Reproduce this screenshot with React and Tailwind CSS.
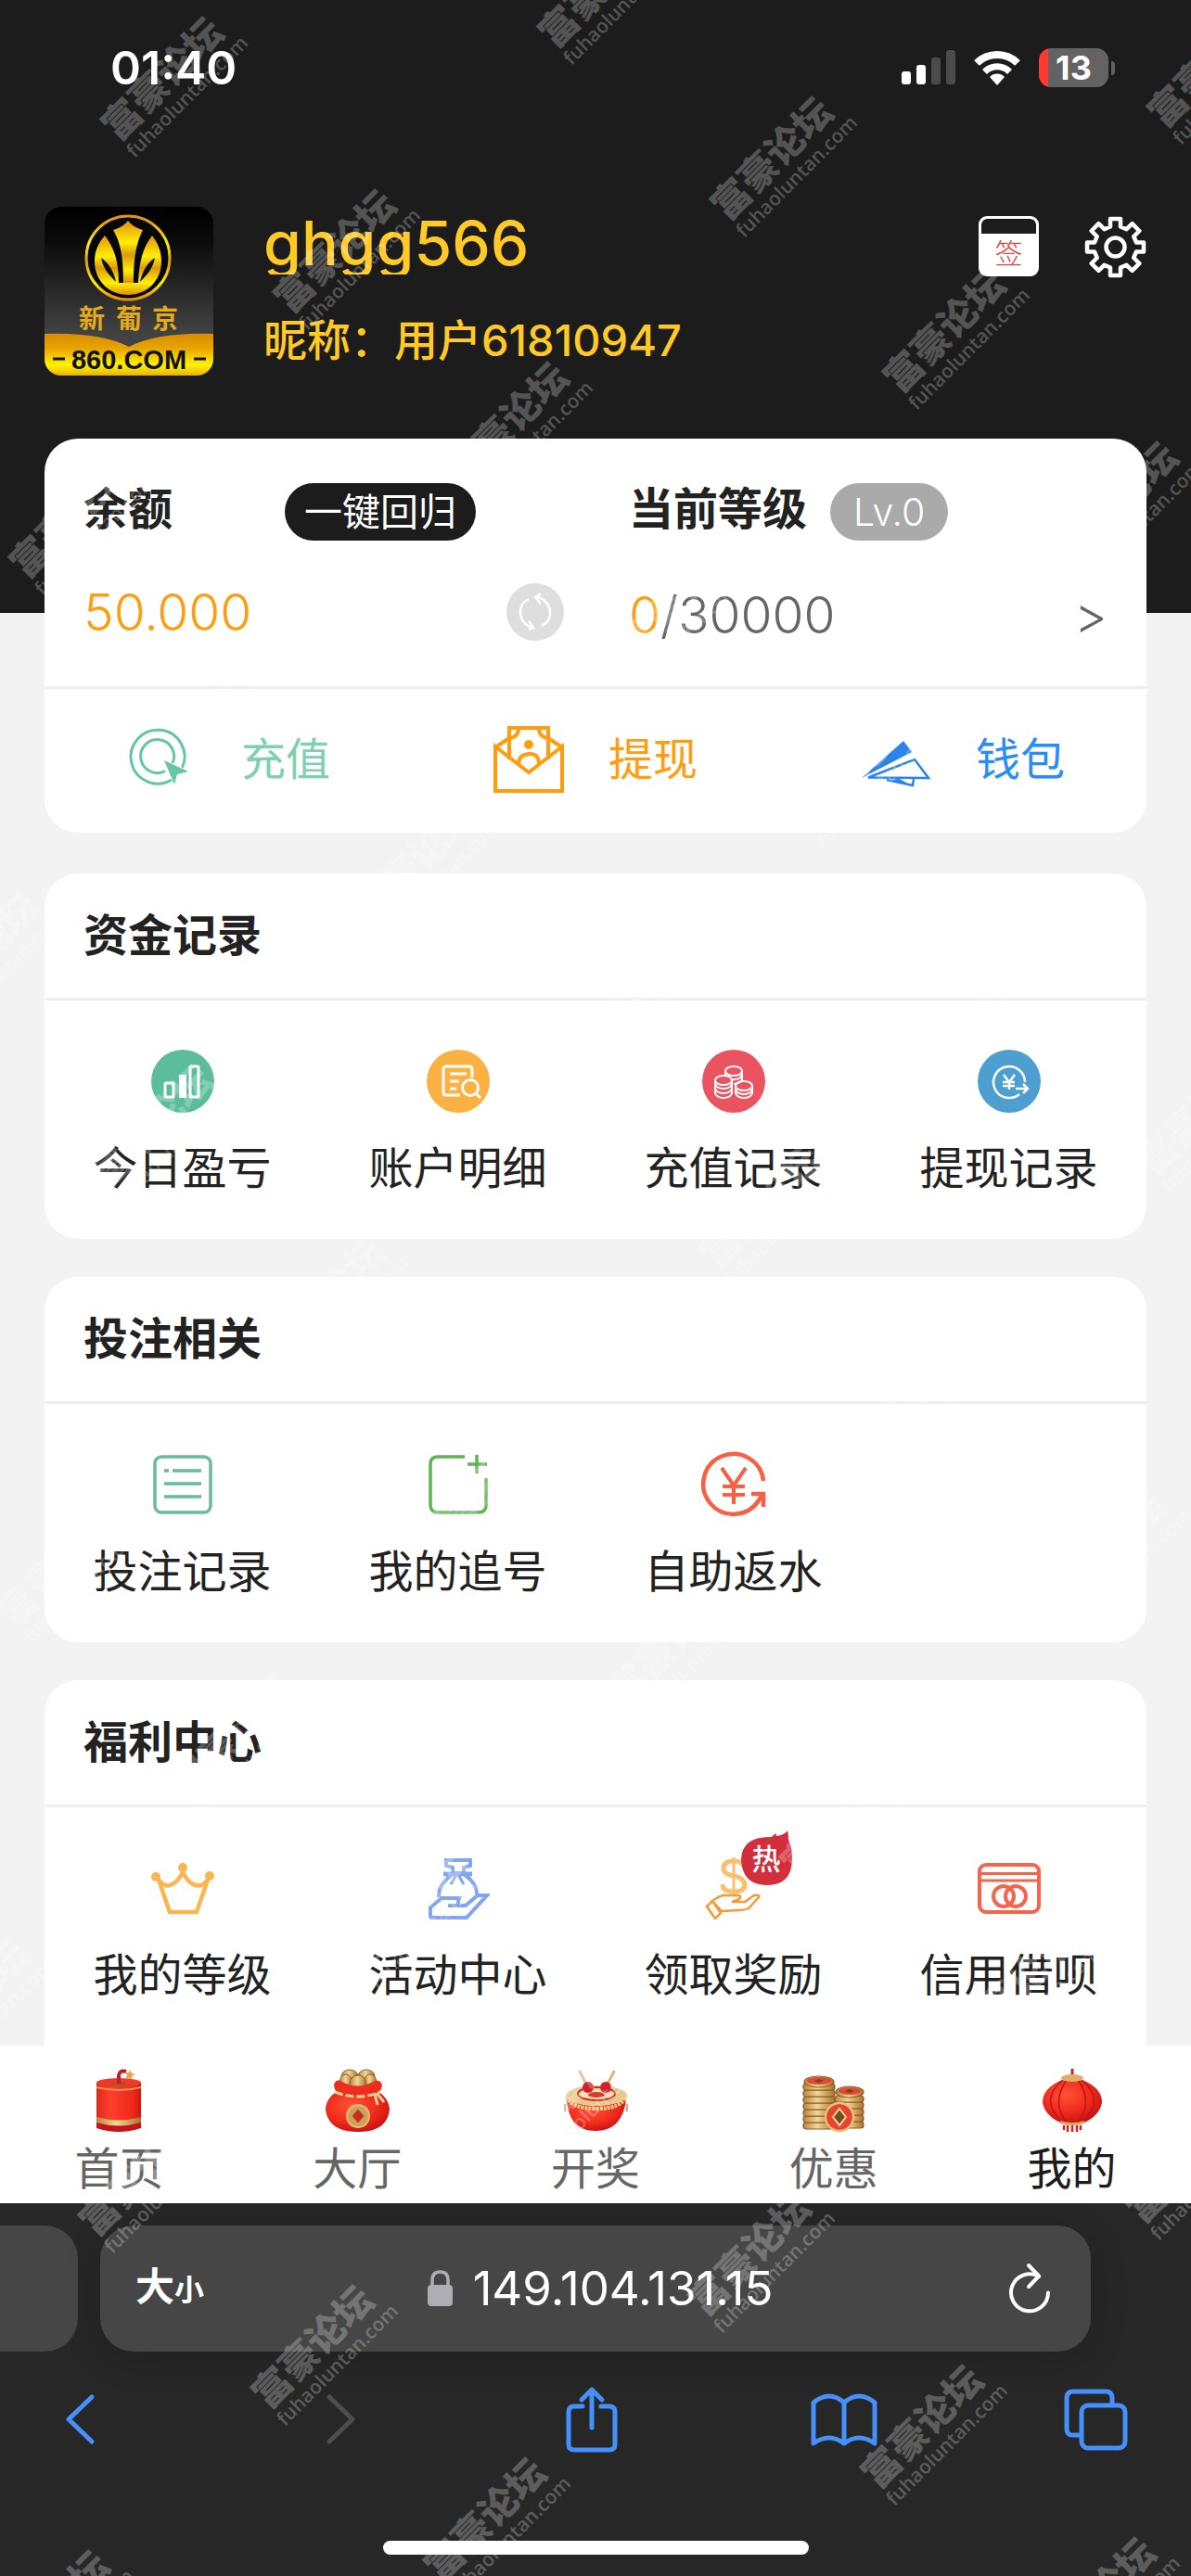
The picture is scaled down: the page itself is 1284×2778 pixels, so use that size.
import clsx from 'clsx';

const WATERMARK_ROWS = [-1, 0, 1, 2, 3, 4, 5, 6, 7, 8, 9, 10, 11, 12, 13, 14, 15, 16];
const WATERMARK_COLS = [-7, -6, -5, -4, -3, -2, -1, 0, 1, 2, 3];

// diagonal lattice, keep only the stamps that reach the screen
const watermarks = WATERMARK_ROWS.flatMap((row) =>
  WATERMARK_COLS.map((col) => ({
    id: `${row}:${col}`,
    left: 102 + row * 186 + col * 471,
    top: 128 + row * 186 - col * 100,
  }))
).filter((m) => m.left > -150 && m.left < 1280 && m.top > -40 && m.top < 2890);

function Watermarks() {
  return (
    <div aria-hidden="true" className="pointer-events-none absolute inset-0 overflow-hidden text-white/25">
      {watermarks.map((m) => (
        <div
          key={m.id}
          className="absolute origin-top-left -rotate-45 whitespace-nowrap"
          style={{ left: m.left, top: m.top }}
        >
          <div className="text-[41px] leading-[42px] font-black">富豪论坛</div>
          <div className="font-['Open_Sans',sans-serif] text-[21px] leading-[22px] font-semibold">fuhaoluntan.com</div>
        </div>
      ))}
    </div>
  );
}

function StatusBar() {
  return (
    <div className="flex h-[146px] items-center justify-between pr-[82px] pl-[119px] text-white">
      <span className="text-[50px] leading-[56px] font-semibold">01:40</span>
      <div className="flex items-center gap-5">
        <svg className="h-[38px] w-[58px]" viewBox="0 0 58 38" fill="currentColor">
          <rect x="0" y="23" width="10" height="14" rx="3" />
          <rect x="16" y="16" width="10" height="21" rx="3" />
          <rect x="32" y="8" width="10" height="29" rx="3" fill="#4b4b4b" />
          <rect x="48" y="0" width="10" height="37" rx="3" fill="#4b4b4b" />
        </svg>
        <svg className="h-[38px] w-[50px]" viewBox="0 0 50 38">
          <path d="M3 14a31.500 31.500 0 0 1 44 0" fill="none" stroke="currentColor" strokeWidth="8" />
          <path d="M11.500 23.500a19 19 0 0 1 27 0" fill="none" stroke="currentColor" strokeWidth="7" />
          <path d="M25 38l-8-9a11 11 0 0 1 16 0z" fill="currentColor" />
        </svg>
        <div className="flex items-center gap-[3px]">
          <div className="flex h-[42px] w-[75px] items-center justify-center overflow-hidden rounded-[13px] bg-linear-to-r from-[#ff3b30] from-14% to-[#636363] to-14% text-[36px] leading-[42px] font-bold">
            13
          </div>
          <div className="h-[15px] w-1 rounded-r-full bg-[#636363]" />
        </div>
      </div>
    </div>
  );
}

function Avatar() {
  return (
    <svg className="size-[182px] shrink-0 rounded-[18px]" viewBox="0 0 182 182" role="img" aria-label="新葡京">
      <defs>
        <linearGradient id="avBg" x1="0" y1="0" x2="0" y2="1">
          <stop offset="0" stopColor="#000" />
          <stop offset=".2" stopColor="#0a0a0a" />
          <stop offset=".75" stopColor="#424242" />
        </linearGradient>
        <linearGradient id="avGold" x1="0" y1="0" x2="0" y2="1">
          <stop offset="0" stopColor="#e2920c" />
          <stop offset=".35" stopColor="#ffee05" />
          <stop offset=".55" stopColor="#dc9a0c" />
          <stop offset=".8" stopColor="#fff000" />
          <stop offset="1" stopColor="#dd9008" />
        </linearGradient>
        <linearGradient id="avBand" x1="0" y1="0" x2="0" y2="1">
          <stop offset="0" stopColor="#d98c00" />
          <stop offset=".35" stopColor="#e8a400" />
          <stop offset=".75" stopColor="#fff200" />
          <stop offset="1" stopColor="#e7b400" />
        </linearGradient>
      </defs>
      <rect width="182" height="182" fill="url(#avBg)" />
      <circle cx="90" cy="55" r="45" fill="#060606" stroke="url(#avGold)" strokeWidth="3" />
      <path
        d="M90 15c4 5 9 8 16 10-6 12-10 26-10 57h-11c0-31-4-45-11-57 7-2 12-5 16-10z"
        fill="url(#avGold)"
      />
      <path
        d="M65 31c-8 9-11 18-11 28 0 21 16 36 36 36s36-15 36-36c0-10-3-19-10-28-10 13-14 28-15 51H80c0-23-5-38-15-51z"
        fill="url(#avGold)"
      />
      <path d="M61 55c2 11 8 18 16 26-2-10-7-20-16-26zM119 55c-2 11-8 18-16 26 2-10 7-20 16-26z" fill="#0c0c0c" />
      <text x="37 77 116" y="131" fontSize="28" fontWeight="700" fill="#e6ab19">
        新葡京
      </text>
      <path d="M0 137q60-2 91 14 31-16 91-14v45H0z" fill="url(#avBand)" />
      <path d="M9 164h13M161 164h13" stroke="#111" strokeWidth="3" />
      <text
        x="91"
        y="175"
        textAnchor="middle"
        fontSize="29"
        fontWeight="700"
        fill="#111"
        className="font-['Liberation_Sans',sans-serif]"
      >
        860.COM
      </text>
    </svg>
  );
}

function ProfileHeader() {
  return (
    <header className="bg-[#1c1c1c] pb-[256px]">
      <StatusBar />
      <div className="mt-[77px] flex h-[182px] items-start pr-12 pl-12">
        <Avatar />
        <div className="ml-[54px] flex-1 text-[#ffc926]">
          <h1 className="mt-[5px] h-[68px] overflow-hidden text-[66px] leading-[68px] font-medium">ghgg566</h1>
          <p className="mt-[43px] text-[47px] leading-[56px] font-medium">昵称：用户61810947</p>
        </div>
        <div className="mt-[10px] flex gap-[49px]">
          <button
            type="button"
            className="flex size-[65px] flex-col overflow-hidden rounded-[9px] border-[3px] border-white bg-white text-[30px] leading-[43px] font-light text-[#d8473c]"
          >
            <span className="block h-4 w-full rounded-t-md bg-[#1c1c1c]" />
            <span className="w-full text-center">签</span>
          </button>
          <button type="button" aria-label="设置" className="text-white">
            <svg className="size-[67px]" viewBox="0 0 67 67" fill="none" stroke="currentColor" strokeWidth="4.500">
              <path
                strokeLinejoin="round"
                d="M28 3h11v8.500l6.500 2.700 6.100-6 7.700 7.800-6 6 2.800 6.500H64v10h-8l-2.800 6.500 6.100 6.100-7.700 7.700-6.100-6-6.500 2.700V64H28v-8.500l-6.500-2.700-6.100 6-7.700-7.700 6-6.100L11 38.500H3v-10h8l2.700-6.500-6-6 7.700-7.800 6.100 6 6.500-2.700z"
              />
              <circle cx="33.500" cy="33.500" r="10" />
            </svg>
          </button>
        </div>
      </div>
    </header>
  );
}

function RechargeIcon() {
  return (
    <svg className="size-[76px]" viewBox="0 0 76 76" fill="none" stroke="#63c6a5" strokeWidth="3">
      <path d="M60.500 47A29 29 0 1 0 49 60" />
      <path d="M50 42A18 18 0 1 0 42 50.500" />
      <path d="M41 39l26 12-12 3-3 11z" fill="#63c6a5" stroke="none" />
    </svg>
  );
}

function WithdrawIcon() {
  return (
    <svg className="size-[76px]" viewBox="0 0 76 76" fill="none" stroke="#ff9d0f" strokeWidth="4">
      <path d="M2 24v48h72V24L38 52z" />
      <path d="M17 38V4h42v34M17 15L2 25M59 15l15 10" />
      <path d="M27 4q0 10-10 11M49 4q0 10 10 11M27 43q0-10 11-11t11 11" />
      <circle cx="38" cy="22" r="5" fill="#ff9d0f" stroke="none" />
    </svg>
  );
}

function WalletIcon() {
  return (
    <svg className="size-[76px]" viewBox="0 0 76 76" fill="#2a84ea">
      <path d="M1 58L46 18l9 12z" />
      <path d="M8 57.500L58 38l15 20z" fill="none" stroke="#2a84ea" strokeWidth="2.500" />
      <path d="M28 60l28 6 1-7" fill="none" stroke="#2a84ea" strokeWidth="2.500" />
      <path d="M28 60l28 7-14-8z" />
    </svg>
  );
}

function AccountCard() {
  const actions = [
    { label: '充值', icon: <RechargeIcon />, color: 'text-[#7fd0b2]' },
    { label: '提现', icon: <WithdrawIcon />, color: 'text-[#ff9d0f]' },
    { label: '钱包', icon: <WalletIcon />, color: 'text-[#2a8cf5]' },
  ];

  return (
    <section className="overflow-hidden rounded-[36px] bg-white">
      <div className="grid grid-cols-2 border-b-[3px] border-[#eee] pt-12 pb-[46px]">
        <div className="pr-[34px] pl-[42px]">
          <div className="flex h-[62px] items-start">
            <h2 className="text-[48px] leading-[56px] font-bold">余额</h2>
            <button
              type="button"
              className="ml-[121px] h-[62px] rounded-full bg-[#1c1c1c] px-[21px] text-[41px] leading-[60px] text-white"
            >
              一键回归
            </button>
          </div>
          <div className="mt-[46px] flex h-[62px] items-center justify-between">
            <span className="text-[55px] leading-[62px] font-light text-[#ff9d0f]">50.000</span>
            <button type="button" aria-label="刷新余额">
              <svg className="size-[62px]" viewBox="0 0 62 62" fill="none" stroke="#fff" strokeWidth="2.500">
                <circle cx="31" cy="31" r="31" fill="#dedede" stroke="none" />
                <path d="M24 17q-10 5-9 15 1 12 13 16M38 46q10-5 9-16-1-11-15-16" />
                <path d="M37 11l-6 4 6 7M24 50l5-2-5-7" />
              </svg>
            </button>
          </div>
        </div>
        <div className="pr-[42px] pl-9">
          <div className="flex h-[62px] items-start">
            <h2 className="text-[48px] leading-[56px] font-bold">当前等级</h2>
            <span className="ml-[25px] h-[62px] rounded-full bg-[#aaa] px-[25px] text-[41px] leading-[62px] font-light text-white">
              Lv.0
            </span>
          </div>
          <a
            href="#level"
            className="mt-[46px] flex h-[65px] items-end justify-between text-[55px] leading-[62px] font-light text-[#666]"
          >
            <span>
              <span className="text-[#ff9d0f]">0</span>/30000
            </span>
            <span>&gt;</span>
          </a>
        </div>
      </div>
      <div className="grid h-[155px] grid-cols-3">
        {actions.map((action) => (
          <button
            key={action.label}
            type="button"
            className={clsx('flex items-center justify-center gap-12 pb-1 text-[48px] leading-[56px]', action.color)}
          >
            {action.icon}
            {action.label}
          </button>
        ))}
      </div>
    </section>
  );
}

function RoundIcon({ color, children }) {
  return (
    <svg className="size-[68px]" viewBox="0 0 68 68" fill="none" stroke="#fff" strokeWidth="3">
      <circle cx="34" cy="34" r="34" fill={color} stroke="none" />
      {children}
    </svg>
  );
}

const fundItems = [
  {
    label: '今日盈亏',
    icon: (
      <RoundIcon color="#5bbd9c">
        <rect x="15" y="36" width="9" height="15" rx="1" />
        <rect x="30" y="27" width="8" height="25" fill="#fff" stroke="none" />
        <rect x="42" y="18" width="9" height="33" rx="1" />
      </RoundIcon>
    ),
  },
  {
    label: '账户明细',
    icon: (
      <RoundIcon color="#fcb242">
        <path d="M49 30V21q0-3-3-3H21q-3 0-3 3v25q0 3 3 3h15" />
        <path d="M25 26h18M25 34h10M25 42h7" />
        <circle cx="47" cy="41" r="8.500" />
        <path d="M53 47l5 5" />
      </RoundIcon>
    ),
  },
  {
    label: '充值记录',
    icon: (
      <RoundIcon color="#ea5460">
        <g strokeWidth="2">
          <ellipse cx="34" cy="23" rx="9" ry="5" />
          <path d="M25 23v5M43 23v12M32 32q9 1 11-5M34 37q8-1 9-5" />
          <ellipse cx="23" cy="33" rx="9" ry="5" />
          <path d="M14 33v14q2 5 9 5t9-5V33M14 37q2 5 9 5t9-5M14 42q2 5 9 5t9-5" />
          <ellipse cx="45" cy="39" rx="9" ry="5" />
          <path d="M36 39v8q2 5 9 5t9-5v-8M36 43q2 5 9 5t9-5" />
        </g>
      </RoundIcon>
    ),
  },
  {
    label: '提现记录',
    icon: (
      <RoundIcon color="#4d9fd0">
        <path d="M51 35a17 17 0 1 0-6 13" strokeWidth="2.500" />
        <path d="M28 27l6 8 6-8M34 35v8M27 35h13M27 39h13" strokeWidth="2.500" />
        <path d="M41 42h12M49 37l5 5-5 5" strokeWidth="2.500" />
      </RoundIcon>
    ),
  },
];

const betItems = [
  {
    label: '投注记录',
    icon: (
      <svg className="size-[68px]" viewBox="0 0 68 68" fill="none" stroke="#69bb9f" strokeWidth="3.500">
        <rect x="4" y="4" width="60" height="60" rx="7" />
        <path d="M14 19h5M23 19h31M14 33h40M14 47h40" />
      </svg>
    ),
  },
  {
    label: '我的追号',
    icon: (
      <svg className="size-[68px]" viewBox="0 0 68 68" fill="none" stroke="#62b256" strokeWidth="3.500">
        <path d="M41 4H12q-8 0-8 8v44q0 8 8 8h44q8 0 8-8V27" />
        <path d="M54 2v20M44 12h21" />
      </svg>
    ),
  },
  {
    label: '自助返水',
    icon: (
      <svg className="size-[68px] overflow-visible" viewBox="0 0 68 68" fill="none" stroke="#f95f43" strokeWidth="4.500">
        <path d="M66 30A32.500 32.500 0 1 0 61 51" />
        <path d="M21 16l13 19 13-19M34 35v20M22 36h24M22 45h24" strokeWidth="4" />
        <path d="M53 44h13v14M65 45l-6 9" />
      </svg>
    ),
  },
];

function HotBadge() {
  return (
    <span className="absolute -top-7 left-[42px] text-[31px] leading-[58px] font-medium text-white">
      <svg className="absolute inset-0 h-[59px] w-[55px]" viewBox="0 0 55 59" fill="#d22e3c">
        <path d="M33 7q2-3 5-4-1 2 0 3 9-1 12-6 1 5 1 10 4 8 4 20 0 29-27 29T0 31Q1 6 33 7z" />
      </svg>
      <span className="relative block w-[55px] pt-[2px] text-center">热</span>
    </span>
  );
}

const welfareItems = [
  {
    label: '我的等级',
    icon: (
      <svg className="size-[68px]" viewBox="0 0 68 68" fill="none" stroke="#fdb64f" strokeWidth="4.500">
        <path d="M8 25l12 35h29l12-35q-6 8-13 6-8-2-14-14-6 12-14 14-6 2-12-6z" />
        <g fill="#fdb64f" stroke="none">
          <circle cx="5" cy="22" r="5" />
          <circle cx="34" cy="12" r="5" />
          <circle cx="63" cy="21" r="5" />
        </g>
      </svg>
    ),
  },
  {
    label: '活动中心',
    icon: (
      <svg className="size-[68px]" viewBox="0 0 68 68" fill="none" stroke="#83a5ef" strokeWidth="4">
        <path d="M21 4h26v6l-7 2v6H28v-6l-7-2z" />
        <path d="M18 19h31" strokeWidth="5" />
        <path d="M27 20Q12 31 13 44M41 20q13 9 13 21" />
        <path d="M32 20l-6 10M34 20l6 10" strokeWidth="3" />
        <path d="M4 66V55l12-10h19q-2 4 0 8H23M33 53h9l13-11h10L43 66H3" />
      </svg>
    ),
  },
  {
    label: '领取奖励',
    hot: true,
    icon: (
      <svg className="size-[68px]" viewBox="0 0 68 68" fill="none" stroke="#f49a38" strokeWidth="2.500">
        <path d="M46 12q-1-7-12-7t-11 8q0 6 11 8t12 9q0 8-12 8t-12-8" stroke="#fbc06c" strokeWidth="5" />
        <path d="M34 1v40" stroke="#fbc06c" strokeWidth="3" />
        <path d="M5 54l6-6 9 13-6 6z" />
        <path d="M11 48q5-4 11-6h17q4 1 1 4l-8 3h14l10-7q6-1 5 2L50 56q-4 2-10 2l-19 1z" />
      </svg>
    ),
  },
  {
    label: '信用借呗',
    icon: (
      <svg className="size-[68px]" viewBox="0 0 68 68" fill="none" stroke="#f3654d" strokeWidth="4">
        <rect x="2" y="9" width="64" height="51" rx="7" />
        <path d="M2 18.500h65M2 26h65" strokeWidth="3" />
        <circle cx="28" cy="43" r="11" />
        <circle cx="41" cy="43" r="11" />
      </svg>
    ),
  },
];

function MenuCard({ title, items, className }) {
  return (
    <section className={clsx('bg-white', className)}>
      <h2 className="flex h-[137px] items-center border-b-[3px] border-[#eee] pl-[42px] text-[48px] leading-[56px] font-bold">
        {title}
      </h2>
      <div className="grid grid-cols-4 pt-[53px] pb-12">
        {items.map((item) => (
          <button key={item.label} type="button" className="flex flex-col items-center text-[48px] leading-[56px]">
            <span className="relative mb-8">
              {item.icon}
              {item.hot && <HotBadge />}
            </span>
            {item.label}
          </button>
        ))}
      </div>
    </section>
  );
}

function TabDefs() {
  return (
    <svg className="absolute size-0" aria-hidden="true">
      <defs>
        <radialGradient id="red" cx=".4" cy=".35" r=".75">
          <stop offset="0" stopColor="#ff5236" />
          <stop offset=".55" stopColor="#f12a1c" />
          <stop offset="1" stopColor="#bb0d12" />
        </radialGradient>
        <linearGradient id="redBar" x1="0" y1="0" x2="1" y2="0">
          <stop offset="0" stopColor="#e0281b" />
          <stop offset=".3" stopColor="#ff3f2b" />
          <stop offset=".8" stopColor="#f02a1c" />
          <stop offset="1" stopColor="#c9180f" />
        </linearGradient>
        <linearGradient id="gold" x1="0" y1="0" x2="1" y2="0">
          <stop offset="0" stopColor="#b98440" />
          <stop offset=".45" stopColor="#f3d695" />
          <stop offset="1" stopColor="#a8722f" />
        </linearGradient>
      </defs>
    </svg>
  );
}

function FirecrackerIcon() {
  return (
    <svg className="size-[70px]" viewBox="0 0 70 70">
      <path d="M11 54h48v11q-24 8-48 0z" fill="#c5131b" />
      <path d="M11 16h48v40q-24 7-48 0z" fill="url(#redBar)" />
      <path d="M11 53q24 7 48 0v6q-24 7-48 0z" fill="url(#gold)" />
      <path d="M11 21q24 6 48 0" fill="none" stroke="#d79a57" strokeWidth="2" />
      <ellipse cx="35" cy="16" rx="24" ry="5" fill="#f0382a" />
      <ellipse cx="35" cy="17" rx="8" ry="2" fill="#a5571f" />
      <path d="M35 17V8q1-6 8-4" fill="none" stroke="#bd1f22" strokeWidth="4" />
      <path d="M47 2l2 4 4 1-4 2 1 4-4-2-4 1 2-4-2-3h4z" fill="#e9a24e" />
    </svg>
  );
}

function PouchIcon() {
  return (
    <svg className="size-[70px]" viewBox="0 0 70 70">
      <g fill="url(#gold)" stroke="#8d5f25" strokeWidth="1">
        <ellipse cx="27" cy="9" rx="9" ry="7" />
        <ellipse cx="45" cy="9" rx="9" ry="7" />
        <ellipse cx="23" cy="16" rx="7" ry="9" />
        <ellipse cx="49" cy="16" rx="7" ry="9" />
        <ellipse cx="36" cy="17" rx="9" ry="9" />
      </g>
      <path d="M12 26Q1 34 1 45q3 24 35 24t34-25q-1-10-11-18z" fill="url(#red)" />
      <path d="M10 18q2-6 7-4 18 11 37 0 7-1 8 5-1 8-10 10-16 5-33 0-9-2-9-11z" fill="#ee2c1f" />
      <path d="M11 26q25 10 49 0" fill="none" stroke="#efcf94" strokeWidth="3" strokeDasharray="9 3" />
      <path d="M54 28l3 12M56 27l8 10" stroke="#efcf94" strokeWidth="3" />
      <circle cx="36" cy="52" r="12" fill="#cf9f5b" stroke="#e7bd7b" strokeWidth="2" />
      <path d="M36 45l6 7-6 7-6-7z" fill="#d3271d" stroke="#8d5f25" />
    </svg>
  );
}

function DrumIcon() {
  return (
    <svg className="size-[70px]" viewBox="0 0 70 70">
      <path d="M4 34q2 34 31 34t33-34z" fill="url(#red)" />
      <ellipse cx="36" cy="30" rx="33" ry="11" fill="#e7c98d" />
      <path d="M4 31q5 13 32 13t32-13" fill="none" stroke="#e9cb8e" strokeWidth="4" strokeDasharray="3 1" />
      <ellipse cx="36" cy="28" rx="20" ry="7" fill="#f5dfb0" stroke="#cf2a26" strokeWidth="2" />
      <ellipse cx="36" cy="29" rx="9" ry="3" fill="#d83a2c" />
      <path d="M18 4l8 15M55 4l-8 15" stroke="#dfb583" strokeWidth="3" strokeLinecap="round" />
      <circle cx="27" cy="21" r="6" fill="#d3202a" />
      <circle cx="46" cy="21" r="6" fill="#d3202a" />
      <path d="M2 39v8M69 39v8" stroke="#d8ab69" strokeWidth="2" />
    </svg>
  );
}

function CoinsIcon() {
  return (
    <svg className="size-[70px]" viewBox="0 0 70 70">
      <g fill="url(#gold)" stroke="#8a5a22" strokeWidth="1.200">
        {[61, 54, 47, 40, 33].map((y) => (
          <rect key={y} x="36" y={y - 3} width="31" height="7" rx="3" />
        ))}
        {[62, 55, 48, 41, 34, 27, 20].map((y) => (
          <rect key={y} x="2" y={y - 3} width="34" height="7" rx="3" />
        ))}
        <ellipse cx="19" cy="15" rx="16" ry="6" />
        <ellipse cx="52" cy="26" rx="15" ry="6" />
      </g>
      <ellipse cx="19" cy="14" rx="13" ry="4" fill="#de4a31" />
      <ellipse cx="52" cy="25" rx="12" ry="4" fill="#de4a31" />
      <path d="M14 14l5-2 5 2-5 2zM47 25l5-2 5 2-5 2z" fill="#714420" />
      <circle cx="41" cy="53" r="15" fill="#e8432f" stroke="#e6bd7d" strokeWidth="2.500" />
      <path d="M41 44l7 9-7 9-7-9z" fill="#76501c" stroke="#f1d39a" strokeWidth="2" />
    </svg>
  );
}

function LanternIcon() {
  return (
    <svg className="size-[70px]" viewBox="0 0 70 70">
      <path d="M35 1v12" stroke="#d11f22" strokeWidth="3" />
      <path d="M24 13h22q21 9 21 24-2 14-19 22H22Q5 51 3 37q0-15 21-24z" fill="url(#red)" />
      <path
        d="M29 13q-17 24 0 46M41 13q17 24 0 46M24 14Q-1 35 24 58M46 14q25 21 0 44"
        fill="none"
        stroke="#b5171a"
        strokeWidth="1.500"
      />
      <ellipse cx="35" cy="11" rx="12" ry="4" fill="#dfb06c" />
      <path d="M22 57q13 4 26 0v3q-13 4-26 0z" fill="#d9a45b" />
      <path d="M26 62v5M30 62v7M35 62v7M40 62v7M44 62v5" stroke="#d21f22" strokeWidth="2.500" />
    </svg>
  );
}

const tabs = [
  { label: '首页', Icon: FirecrackerIcon },
  { label: '大厅', Icon: PouchIcon },
  { label: '开奖', Icon: DrumIcon },
  { label: '优惠', Icon: CoinsIcon },
  { label: '我的', Icon: LanternIcon, active: true },
];

function TabBar() {
  return (
    <nav className="grid grid-cols-5 bg-white pt-6 pb-[9px]">
      <TabDefs />
      {tabs.map(({ label, Icon, active }) => (
        <a
          key={label}
          href={`#${label}`}
          className={clsx(
            'flex flex-col items-center gap-[11px] text-[48px] leading-[56px]',
            active ? 'text-[#1c1c1c]' : 'text-[#666]'
          )}
        >
          <Icon />
          {label}
        </a>
      ))}
    </nav>
  );
}

function ToolButton({ label, disabled, children }) {
  return (
    <button type="button" aria-label={label} disabled={disabled} className="text-[#4690fb] disabled:text-[#4d4d4d]">
      <svg
        className="size-[72px]"
        viewBox="0 0 72 72"
        fill="none"
        stroke="currentColor"
        strokeWidth="5"
        strokeLinecap="round"
        strokeLinejoin="round"
      >
        {children}
      </svg>
    </button>
  );
}

function BrowserBar() {
  return (
    <footer className="bg-[#272727] pt-6 pb-6 text-white">
      <div className="flex h-[136px] gap-6 pr-[108px]">
        <div className="w-[84px] rounded-r-[36px] bg-[#464646]" />
        <div className="flex flex-1 items-center justify-between rounded-[36px] bg-[#464646] pr-[42px] pl-[38px] shadow-[0_8px_40px_rgba(0,0,0,0.15)]">
          <button type="button" className="flex items-baseline font-bold">
            <span className="text-[42px] leading-[56px]">大</span>
            <span className="text-[32px] leading-[56px]">小</span>
          </button>
          <button type="button" className="mr-3 flex items-center gap-[22px] text-[51px] leading-[56px]">
            <svg className="h-[40px] w-[27px]" viewBox="0 0 27 40">
              <rect y="16" width="27" height="23" rx="4" fill="#aeadb4" />
              <path d="M5 18v-7q0-9 8.500-9T22 11v7" fill="none" stroke="#aeadb4" strokeWidth="3.500" />
            </svg>
            149.104.131.15
          </button>
          <button type="button" aria-label="重新载入">
            <svg
              className="h-[56px] w-[48px]"
              viewBox="0 0 48 56"
              fill="none"
              stroke="currentColor"
              strokeWidth="4"
              strokeLinecap="round"
              strokeLinejoin="round"
            >
              <path d="M44 32.500A20 20 0 1 1 34 15" />
              <path d="M23 3l11 11.500L23 26" />
            </svg>
          </button>
        </div>
      </div>
      <div className="mt-[37px] flex justify-between pr-[67px] pl-[50px]">
        <div className="flex gap-[209px]">
          <ToolButton label="后退">
            <path d="M49 12L24 36l25 24" />
          </ToolButton>
          <ToolButton label="前进" disabled>
            <path d="M24 12l25 24-25 24" />
          </ToolButton>
        </div>
        <ToolButton label="共享">
          <path d="M26 22h-9q-6 0-6 6v35q0 6 6 6h38q6 0 6-6V28q0-6-6-6h-9" />
          <path d="M36 45V4M25 15L36 4l11 11" />
        </ToolButton>
        <ToolButton label="书签">
          <path d="M36 18Q20 4 3 18v44q17-12 33 0 16-12 33 0V18Q52 4 36 18zM36 18v44" />
        </ToolButton>
        <ToolButton label="标签页">
          <rect x="21" y="21" width="47" height="46" rx="7" />
          <path d="M19 53h-8q-6 0-6-7V13q0-7 7-7h35q7 0 7 7v6" />
        </ToolButton>
      </div>
      <div className="mx-auto mt-[95px] h-[15px] w-[459px] rounded-full bg-white" />
    </footer>
  );
}

export default function App() {
  return (
    <div className="relative flex min-h-screen flex-col overflow-hidden bg-[#f3f3f3] font-[Inter,'Noto_Sans_CJK_SC',sans-serif] text-[#222]">
      <ProfileHeader />
      <main className="-mt-[188px] flex flex-1 flex-col px-12">
        <AccountCard />
        <MenuCard title="资金记录" items={fundItems} className="mt-11 rounded-[36px]" />
        <MenuCard title="投注相关" items={betItems} className="mt-[41px] rounded-[36px]" />
        <MenuCard title="福利中心" items={welfareItems} className="mt-[41px] flex-1 rounded-t-[36px]" />
      </main>
      <TabBar />
      <BrowserBar />
      <Watermarks />
    </div>
  );
}
